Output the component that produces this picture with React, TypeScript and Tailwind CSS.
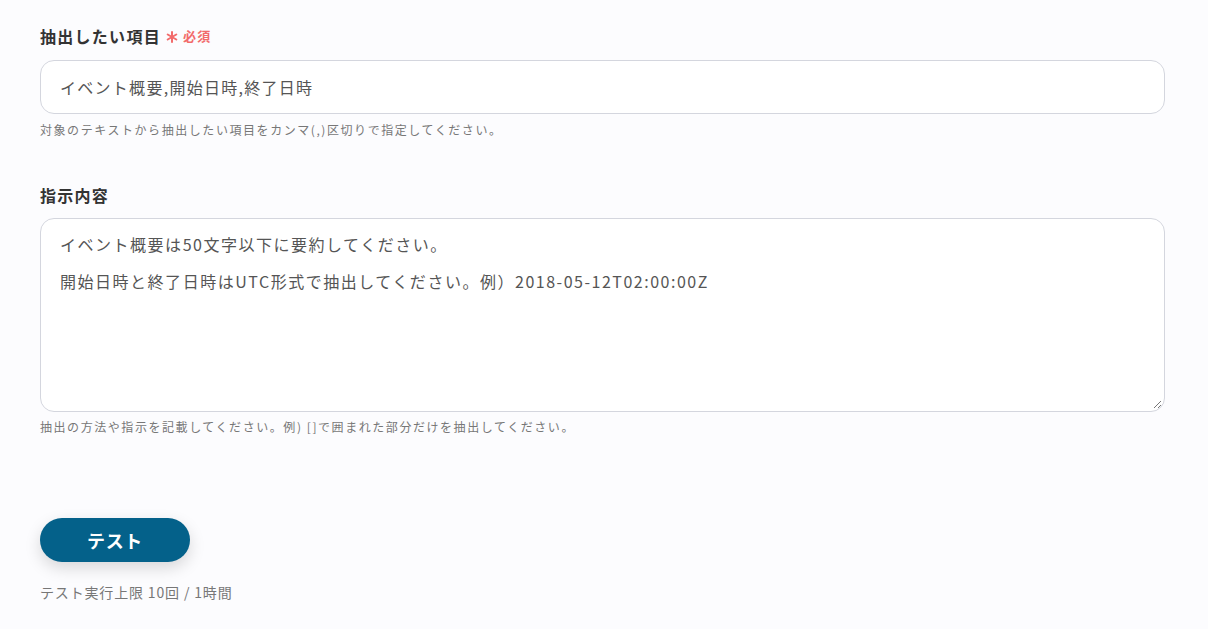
import React from 'react';

const Asterisk: React.FC = () => (
  <svg width="12" height="12" viewBox="0 0 12 12" className="mt-[2px]">
    <g stroke="#f26b6b" strokeWidth="2" strokeLinecap="round">
      <line x1="6" y1="1" x2="6" y2="11" />
      <line x1="1.7" y1="3.5" x2="10.3" y2="8.5" />
      <line x1="1.7" y1="8.5" x2="10.3" y2="3.5" />
    </g>
  </svg>
);

const App: React.FC = () => {
  return (
    <div
      className="min-h-[629px] w-full bg-[#fcfcfe] px-10 pt-[25px] tracking-[0.08em] text-[#333]"
      style={{ fontFamily: '"Noto Sans CJK JP", "Noto Sans", sans-serif' }}
    >
      {/* 抽出したい項目 */}
      <div className="flex items-center gap-[5px]">
        <span className="text-[16px] font-bold leading-[22px] text-[#333]">抽出したい項目</span>
        <Asterisk />
        <span className="text-[13px] font-bold tracking-[0.1em] text-[#f26b6b]">必須</span>
      </div>
      <div className="mt-[13px] flex h-[54px] w-[1125px] items-center rounded-[14px] border border-[#d4d6de] bg-white px-[19px] text-[16px] text-[#555]">
        イベント概要,開始日時,終了日時
      </div>
      <p className="mt-[7px] text-[12px] leading-[18px] tracking-[0.13em] text-[#777]">
        対象のテキストから抽出したい項目をカンマ(,)区切りで指定してください。
      </p>

      {/* 指示内容 */}
      <div className="mt-[45px] text-[16px] font-bold leading-[22px] text-[#333]">指示内容</div>
      <div className="relative mt-[12px] h-[194px] w-[1125px] rounded-[14px] border border-[#d4d6de] bg-white px-[19px] pt-[7px] text-[16px] leading-[37px] tracking-[0.095em] text-[#555]">
        <div>イベント概要は50文字以下に要約してください。</div>
        <div>開始日時と終了日時はUTC形式で抽出してください。例）2018-05-12T02:00:00Z</div>
        <svg className="absolute bottom-[2px] right-[2px]" width="9" height="9" viewBox="0 0 9 9">
          <line x1="8" y1="1" x2="1" y2="8" stroke="#777" strokeWidth="1" />
          <line x1="8" y1="5" x2="5" y2="8" stroke="#777" strokeWidth="1" />
        </svg>
      </div>
      <p className="mt-[6px] text-[12px] leading-[18px] tracking-[0.13em] text-[#777]">
        抽出の方法や指示を記載してください。例) []で囲まれた部分だけを抽出してください。
      </p>

      {/* テスト */}
      <button className="mt-[82px] flex h-[44px] w-[150px] items-center justify-center rounded-full bg-[#04618a] text-[18px] font-bold tracking-[0.04em] text-white shadow-[0_6px_16px_rgba(0,0,0,0.15)]">
        テスト
      </button>
      <p className="mt-[21px] text-[14px] leading-[18px] tracking-[0.06em] text-[#777]">テスト実行上限 10回 / 1時間</p>
    </div>
  );
};

export default App;
